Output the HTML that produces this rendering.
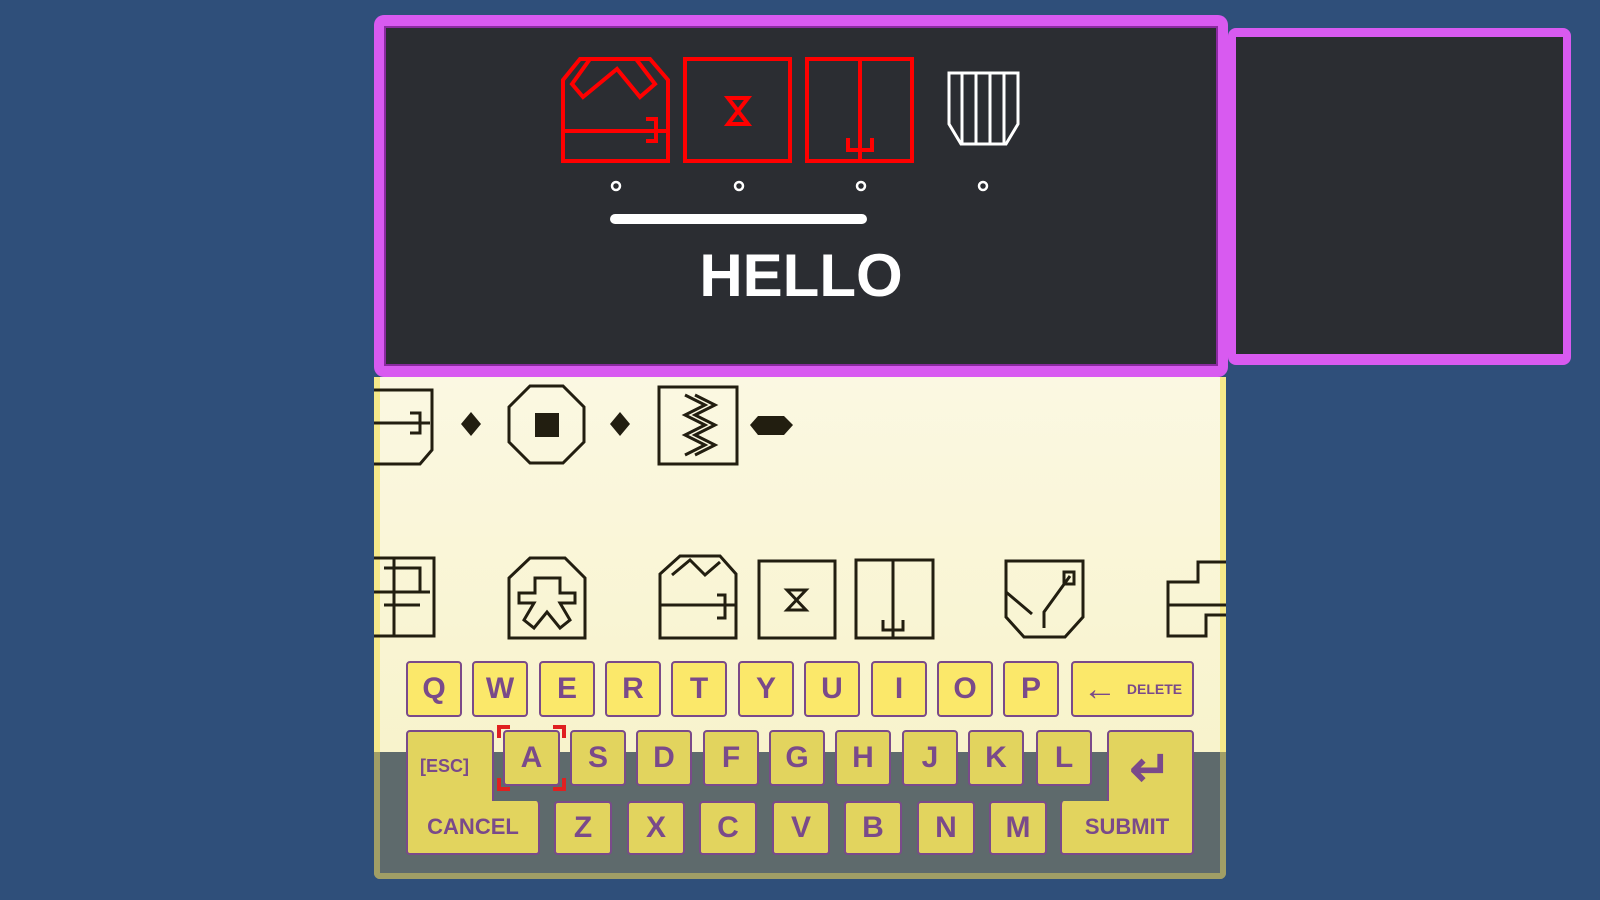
<!DOCTYPE html><html><head><style>
body{margin:0;width:1600px;height:900px;background:#2f4f7a;position:relative;overflow:hidden;font-family:"Liberation Sans",sans-serif}
.k{position:absolute;background:#fbe86a;border:2px solid #7a4a8a;border-radius:4px;box-sizing:border-box;color:#7a4a8a;font-weight:bold;font-size:30px;display:flex;align-items:center;justify-content:center}
.d{background:#e2d45e}
</style></head><body>
<div style="position:absolute;left:374px;top:15px;width:854px;height:362px;background:#d85af0;border-radius:10px"></div>
<div style="position:absolute;left:384px;top:26px;width:834px;height:340px;background:#2b2d32;border:2px solid #8a2aa0;box-sizing:border-box"></div>
<div style="position:absolute;left:1228px;top:28px;width:343px;height:337px;background:#d85af0;border-radius:8px"></div>
<div style="position:absolute;left:1236px;top:37px;width:327px;height:317px;background:#2b2d32"></div>
<div style="position:absolute;left:374px;top:377px;width:852px;height:375px;background:linear-gradient(#fbf8e2,#f8f3cc);border-left:6px solid #f5e98a;border-right:6px solid #f5e98a;box-sizing:border-box"></div>
<div style="position:absolute;left:374px;top:752px;width:852px;height:127px;background:#5e6a6c;border:6px solid #a09e66;border-top:none;box-sizing:border-box;border-radius:0 0 6px 6px"></div>
<svg width="1600" height="900" style="position:absolute;left:0;top:0" fill="none">
<g stroke="#f00" stroke-width="4">
<path d="M563 161V80L580 59H650L668 80V161Z M563 131H668 M646 119H656V141H646 M590 59L572 84L583 97L617 69L640 97L655 84L636 59"/>
<rect x="685" y="59" width="105" height="102"/><path d="M728 98H748L728 124H748Z"/>
<rect x="807" y="59" width="105" height="102"/><path d="M860 59V161 M848 138V150H872V138"/>
</g>
<path d="M949 73H1018V124L1006 144H961L949 124Z M962 73V144 M976 73V144 M990 73V144 M1004 73V144" stroke="#fff" stroke-width="3"/>
<g stroke="#fff" stroke-width="2.5"><circle cx="616" cy="186" r="4"/><circle cx="739" cy="186" r="4"/><circle cx="861" cy="186" r="4"/><circle cx="983" cy="186" r="4"/></g>
<path d="M615 219H862" stroke="#fff" stroke-width="10" stroke-linecap="round"/>
<g stroke="#221e10" stroke-width="3">
<path d="M374 390H432V450L420 464H374 M374 423H430 M410 413H420V433H410"/>
<path d="M530 386H563L584 407V442L563 463H530L509 442V407Z"/>
<rect x="659" y="387" width="78" height="77"/><path d="M685 395L705 405L685 415L705 425L685 435L705 445L685 455 M695 395L715 405L695 415L715 425L695 435L715 445L695 455"/>
<path d="M374 558H434V636H374 M384 568H420V592H384 M374 592H430 M384 605H420 M394 558V636"/>
<path d="M530 558H565L585 578V638H509V578Z M535 578H560V593H575V603H560L570 620L560 628L547 612L534 628L524 620L534 603H519V593H535Z"/>
<path d="M660 588V638H736V574L720 556H680L660 574Z M660 605H736 M672 575L690 560L705 575L720 562 M717 595H725V618H717"/>
<rect x="759" y="561" width="76" height="77"/><path d="M787 590H806L787 610H806Z"/>
<rect x="856" y="560" width="77" height="78"/><path d="M893 560V638 M883 620V630H903V620"/>
<path d="M1006 561H1083V617L1065 637H1024L1006 617Z M1044 628V612L1070 576 M1006 592L1032 614 M1064 572H1074V584H1064Z"/>
<path d="M1226 562H1198V582H1168V636H1206V615H1226 M1168 605H1226"/>
</g>
<g fill="#221e10"><path d="M471 412L481 424L471 436L461 424Z"/><rect x="535" y="413" width="24" height="24"/><path d="M620 412L630 424L620 436L610 424Z"/><path d="M758 416H784L793 425L784 435H758L750 425Z"/></g>
</svg>
<div style="position:absolute;left:0;top:0;width:1600px;height:900px;font-size:60px;color:#fff;font-weight:bold;text-align:center;line-height:1">
<div style="position:absolute;left:601px;width:400px;top:246px">HELLO</div></div>
<div class="k" style="left:406px;top:661px;width:56px;height:56px">Q</div>
<div class="k" style="left:472px;top:661px;width:56px;height:56px">W</div>
<div class="k" style="left:539px;top:661px;width:56px;height:56px">E</div>
<div class="k" style="left:605px;top:661px;width:56px;height:56px">R</div>
<div class="k" style="left:671px;top:661px;width:56px;height:56px">T</div>
<div class="k" style="left:738px;top:661px;width:56px;height:56px">Y</div>
<div class="k" style="left:804px;top:661px;width:56px;height:56px">U</div>
<div class="k" style="left:871px;top:661px;width:56px;height:56px">I</div>
<div class="k" style="left:937px;top:661px;width:56px;height:56px">O</div>
<div class="k" style="left:1003px;top:661px;width:56px;height:56px">P</div>
<div class="k" style="left:1071px;top:661px;width:123px;height:56px;font-size:14px"><span style="font-size:34px;margin-right:10px">←</span>DELETE</div>
<div class="k d" style="left:406px;top:730px;width:88px;height:125px;align-items:flex-start;justify-content:flex-start;padding:24px 0 0 12px;font-size:18px">[ESC]</div>
<div class="k d" style="left:406px;top:801px;width:134px;height:54px;font-size:22px;border-top:none;border-radius:0 4px 4px 4px">CANCEL</div>
<div class="k d" style="left:503px;top:730px;width:57px;height:56px">A</div>
<div class="k d" style="left:570px;top:730px;width:56px;height:56px">S</div>
<div class="k d" style="left:636px;top:730px;width:56px;height:56px">D</div>
<div class="k d" style="left:703px;top:730px;width:56px;height:56px">F</div>
<div class="k d" style="left:769px;top:730px;width:56px;height:56px">G</div>
<div class="k d" style="left:835px;top:730px;width:56px;height:56px">H</div>
<div class="k d" style="left:902px;top:730px;width:56px;height:56px">J</div>
<div class="k d" style="left:968px;top:730px;width:56px;height:56px">K</div>
<div class="k d" style="left:1036px;top:730px;width:56px;height:56px">L</div>
<div class="k d" style="left:1107px;top:730px;width:87px;height:125px;font-size:50px;align-items:flex-start;padding-top:8px">↵</div>
<div class="k d" style="left:1060px;top:801px;width:134px;height:54px;font-size:22px;border-top:none;border-radius:4px 0 4px 4px">SUBMIT</div>
<div class="k d" style="left:554px;top:801px;width:58px;height:54px">Z</div>
<div class="k d" style="left:627px;top:801px;width:58px;height:54px">X</div>
<div class="k d" style="left:699px;top:801px;width:58px;height:54px">C</div>
<div class="k d" style="left:772px;top:801px;width:58px;height:54px">V</div>
<div class="k d" style="left:844px;top:801px;width:58px;height:54px">B</div>
<div class="k d" style="left:917px;top:801px;width:58px;height:54px">N</div>
<div class="k d" style="left:989px;top:801px;width:58px;height:54px">M</div>
<svg width="1600" height="900" style="position:absolute;left:0;top:0" fill="none" stroke="#e02020" stroke-width="4"><path d="M499 738V727H510 M553 727H564V738 M499 778V789H510 M553 789H564V778"/></svg>
</body></html>
